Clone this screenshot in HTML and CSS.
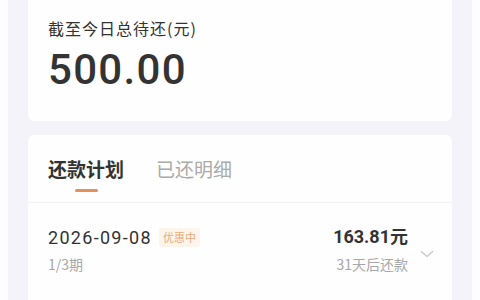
FILE: index.html
```html
<!DOCTYPE html>
<html lang="zh">
<head>
<meta charset="utf-8">
<link rel="stylesheet" href="styles.css">
</head>
<body>
<div class="page">
  <div class="wrap">
    <section class="card summary">
      <div class="label">截至今日总待还(元)</div>
      <div class="amount">500.00</div>
    </section>
    <section class="card plan">
      <div class="tabs">
        <div class="tab active">还款计划<span class="bar"></span></div>
        <div class="tab">已还明细</div>
      </div>
      <div class="row">
        <div class="left">
          <div class="line1"><span class="date">2026-09-08</span><span class="badge">优惠中</span></div>
          <div class="sub">1/3期</div>
        </div>
        <div class="right">
          <div class="money">163.81元</div>
          <div class="sub">31天后还款</div>
        </div>
        <svg class="chev" width="14" height="8" viewBox="0 0 14 8"><path d="M1 1.2 L7 6.5 L13 1.2" fill="none" stroke="#c4c4c8" stroke-width="1.2"/></svg>
      </div>
    </section>
  </div>
</div>
</body>
</html>
```
FILE: styles.css
```css
* { box-sizing: border-box; }
html, body { margin: 0; padding: 0; }
body {
  font-family: "Noto Sans CJK SC", "Noto Sans", sans-serif;
  color: #333;
  background: #fdfdff;
}
.page {
  width: 480px;
  height: 300px;
  overflow: hidden;
  padding: 0 8px;
}
.wrap {
  height: 100%;
  background: #f4f3fa;
  padding: 0 20px;
}
.card {
  background: #fefefe;
  border-radius: 6px;
}
.summary {
  height: 121px;
  border-radius: 0 0 6px 6px;
  padding: 16px 20px 0;
}
.label {
  font-size: 16px;
  line-height: 24px;
  letter-spacing: 1px;
  color: #333;
}
.amount {
  font-family: "Roboto", "Noto Sans", sans-serif;
  font-size: 42px;
  font-weight: 500;
  line-height: 48px;
  margin-top: 6px;
  letter-spacing: 1.3px;
  color: #333;
}
.plan {
  margin-top: 14px;
  height: 200px;
}
.tabs {
  height: 68px;
  display: flex;
  align-items: center;
  gap: 32px;
  padding: 0 20px;
  border-bottom: 1px solid #f2f2f4;
}
.tab {
  position: relative;
  font-size: 19px;
  line-height: 24px;
  color: #aaa;
}
.tab.active {
  color: #333;
  font-weight: 700;
}
.bar {
  position: absolute;
  left: 50%;
  top: 32px;
  width: 23px;
  height: 3px;
  margin-left: -11px;
  border-radius: 2px;
  background: #e0915c;
}
.row {
  display: flex;
  align-items: flex-start;
  padding: 22px 18px 0 20px;
}
.left { flex: 1; }
.line1 {
  display: flex;
  align-items: center;
  height: 24px;
}
.date {
  font-family: "Roboto", "Noto Sans", sans-serif;
  font-size: 18px;
  letter-spacing: 1.3px;
  color: #333;
}
.badge {
  margin-left: 7px;
  padding: 0 4px;
  height: 19px;
  line-height: 19px;
  font-size: 11px;
  color: #e6ac7c;
  background: #fdf5ec;
  border-radius: 3px;
}
.sub {
  font-size: 14px;
  line-height: 20px;
  margin-top: 5px;
  color: #a8a8a8;
}
.right { text-align: right; }
.money {
  font-family: "Roboto", "Noto Sans CJK SC", sans-serif;
  font-size: 18px;
  font-weight: 700;
  line-height: 24px;
  color: #333;
}
.chev {
  margin: 25px 0 0 12px;
}
```
